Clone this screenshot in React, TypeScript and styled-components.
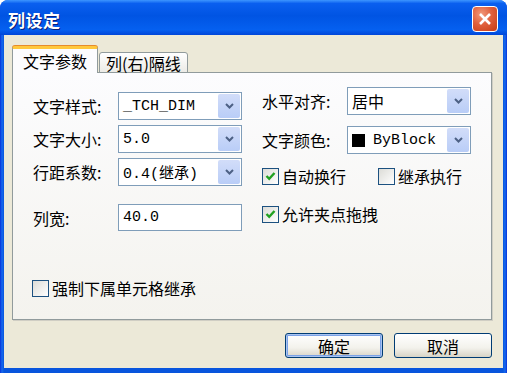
import React from "react";
import styled, { createGlobalStyle } from "styled-components";

const GlobalStyle = createGlobalStyle`
  html, body {
    margin: 0;
    padding: 0;
    background: #ffffff;
  }
  body {
    font-family: "Noto Sans CJK SC", "Noto Sans", sans-serif;
    color: #000000;
  }
`;

const Window = styled.div`
  width: 507px;
  height: 373px;
  display: flex;
  flex-direction: column;
  background: linear-gradient(to right, #0831d9 0px, #166aee 2px, #0855dd 4px, #0855dd 503px, #166aee 505px, #0831d9 507px);
  border-radius: 8px 8px 0 0;
  overflow: hidden;
`;

const TitleBar = styled.div`
  height: 35px;
  flex: none;
  display: flex;
  align-items: center;
  justify-content: space-between;
  padding: 3px 9px 0 8px;
  box-sizing: border-box;
  background: linear-gradient(
    to bottom,
    #3d95ff 0%,
    #0a5fef 10%,
    #0054e3 45%,
    #0560f0 85%,
    #0046d8 100%
  );
`;

const Title = styled.span`
  font-size: 17px;
  font-weight: 700;
  color: #ffffff;
  letter-spacing: 0.5px;
  text-shadow: 1px 1px 0 #0a1e7a;
`;

const CloseButton = styled.div`
  width: 26px;
  height: 26px;
  box-sizing: border-box;
  border: 1px solid #ffffff;
  border-radius: 4px;
  background: radial-gradient(circle at 35% 30%, #f19a7c 0%, #e0603d 45%, #c63a14 100%);
  display: flex;
  align-items: center;
  justify-content: center;
`;

const Body = styled.div`
  flex: 1;
  margin: 0 4px 5px 4px;
  background: #ece9d8;
  display: flex;
  flex-direction: column;
  padding: 12px 11px 9px 8px;
`;

const Tabs = styled.div`
  display: flex;
  align-items: flex-end;
  height: 26px;
  position: relative;
  z-index: 1;
  margin-bottom: -1px;
`;

const Tab = styled.div<{ $active?: boolean }>`
  box-sizing: border-box;
  height: ${(p) => (p.$active ? "27px" : "21px")};
  padding: 0 ${(p) => (p.$active ? "10px" : "6px")};
  margin-left: ${(p) => (p.$active ? "0" : "1px")};
  display: flex;
  align-items: center;
  justify-content: center;
  font-size: 16px;
  line-height: 1;
  border: 1px solid #919b9c;
  border-bottom: ${(p) => (p.$active ? "none" : "1px solid #919b9c")};
  border-top: ${(p) => (p.$active ? "3px solid #ffc83c" : "1px solid #919b9c")};
  border-radius: 3px 3px 0 0;
  background: ${(p) => (p.$active ? "#fcfcfe" : "linear-gradient(#ffffff, #ecebe6)")};
  box-shadow: ${(p) => (p.$active ? "0 -1px 0 #e68b2c" : "none")};
`;

const Panel = styled.div`
  height: 248px;
  box-sizing: border-box;
  border: 1px solid #919b9c;
  background: linear-gradient(#fcfcfe, #f4f3ee);
  display: flex;
  flex-direction: column;
  box-shadow: 1px 1px 0 #d0cec4;
`;

const Columns = styled.div`
  display: grid;
  grid-template-columns: 209px 210px;
  column-gap: 20px;
  padding-left: 20px;
`;

const Column = styled.div<{ $top: number }>`
  display: flex;
  flex-direction: column;
  padding-top: ${(p) => p.$top}px;
`;

const Row = styled.div<{ $gap?: number }>`
  display: flex;
  align-items: center;
  margin-top: ${(p) => p.$gap ?? 0}px;
`;

const Label = styled.span`
  width: 85px;
  flex: none;
  font-size: 16px;
  white-space: nowrap;
`;

const Combo = styled.div`
  width: 124px;
  height: 28px;
  box-sizing: border-box;
  border: 1px solid #7f9db9;
  background: #ffffff;
  display: flex;
  align-items: stretch;
`;

const Value = styled.span<{ $cjk?: boolean }>`
  flex: 1;
  display: flex;
  align-items: center;
  gap: 8px;
  padding-left: 4px;
  font-family: ${(p) =>
    p.$cjk ? '"Noto Sans CJK SC", sans-serif' : '"Liberation Mono", "Noto Sans CJK SC", monospace'};
  font-size: ${(p) => (p.$cjk ? "16px" : "15px")};
  white-space: nowrap;
  overflow: hidden;
`;

const Swatch = styled.span`
  width: 13px;
  height: 13px;
  background: #000000;
  flex: none;
`;

const DropButton = styled.span`
  width: 22px;
  margin: 1px;
  border-radius: 2px;
  background: linear-gradient(#d2ddf9, #b9cdf7);
  display: flex;
  align-items: center;
  justify-content: center;
`;

const TextField = styled.div`
  width: 124px;
  height: 27px;
  box-sizing: border-box;
  border: 1px solid #7f9db9;
  background: #ffffff;
  padding-left: 4px;
  display: flex;
  align-items: center;
  font-family: "Liberation Mono", monospace;
  font-size: 15px;
`;

const CheckRow = styled.label<{ $width?: number }>`
  display: flex;
  align-items: center;
  gap: 3px;
  font-size: 16px;
  width: ${(p) => (p.$width ? `${p.$width}px` : "auto")};
  white-space: nowrap;
`;

const Box = styled.span`
  width: 17px;
  height: 17px;
  box-sizing: border-box;
  border: 1px solid #1c5180;
  background: linear-gradient(135deg, #dcdcd7, #ffffff);
  display: flex;
  align-items: center;
  justify-content: center;
  flex: none;
`;

const BottomRow = styled.div`
  margin-top: auto;
  padding: 0 0 19px 19px;
`;

const Buttons = styled.div`
  display: flex;
  justify-content: flex-end;
  gap: 11px;
  margin-top: 13px;
`;

const Button = styled.button<{ $default?: boolean }>`
  width: 98px;
  height: 25px;
  border: 1px solid #003c74;
  border-radius: 3px;
  background: linear-gradient(#ffffff, #f3f2ec 60%, #d8d4c6);
  font-family: "Noto Sans CJK SC", sans-serif;
  font-size: 16px;
  line-height: 1;
  padding: 0;
  color: #000000;
  box-shadow: ${(p) =>
    p.$default ? "inset 0 0 0 1px #a9c4f0, inset 0 0 0 2px #7ba2e7" : "none"};
`;

const Chevron = () => (
  <svg width="9" height="6" viewBox="0 0 9 6">
    <path d="M1 1 L4.5 4.5 L8 1" fill="none" stroke="#4d6185" strokeWidth="2" />
  </svg>
);

const Check = ({ checked }: { checked?: boolean }) => (
  <Box>
    {checked && (
      <svg width="11" height="10" viewBox="0 0 11 10">
        <path d="M1.5 5 L4.2 7.8 L9.5 2" fill="none" stroke="#21a121" strokeWidth="2.4" />
      </svg>
    )}
  </Box>
);

const Select = ({ children, cjk }: { children: React.ReactNode; cjk?: boolean }) => (
  <Combo>
    <Value $cjk={cjk}>{children}</Value>
    <DropButton>
      <Chevron />
    </DropButton>
  </Combo>
);

export default function App() {
  return (
    <>
      <GlobalStyle />
      <Window>
        <TitleBar>
          <Title>列设定</Title>
          <CloseButton>
            <svg width="14" height="14" viewBox="0 0 14 14">
              <path d="M2 2 L12 12 M12 2 L2 12" stroke="#ffffff" strokeWidth="2.6" />
            </svg>
          </CloseButton>
        </TitleBar>
        <Body>
          <Tabs>
            <Tab $active>文字参数</Tab>
            <Tab>列(右)隔线</Tab>
          </Tabs>
          <Panel>
            <Columns>
              <Column $top={19}>
                <Row>
                  <Label>文字样式:</Label>
                  <Select>_TCH_DIM</Select>
                </Row>
                <Row $gap={5}>
                  <Label>文字大小:</Label>
                  <Select>5.0</Select>
                </Row>
                <Row $gap={5}>
                  <Label>行距系数:</Label>
                  <Select>0.4(继承)</Select>
                </Row>
                <Row $gap={18}>
                  <Label>列宽:</Label>
                  <TextField>40.0</TextField>
                </Row>
              </Column>
              <Column $top={14}>
                <Row>
                  <Label>水平对齐:</Label>
                  <Select cjk>居中</Select>
                </Row>
                <Row $gap={11}>
                  <Label>文字颜色:</Label>
                  <Select>
                    <Swatch />
                    ByBlock
                  </Select>
                </Row>
                <Row $gap={10}>
                  <CheckRow $width={116}>
                    <Check checked />
                    自动换行
                  </CheckRow>
                  <CheckRow>
                    <Check />
                    继承执行
                  </CheckRow>
                </Row>
                <Row $gap={14}>
                  <CheckRow>
                    <Check checked />
                    允许夹点拖拽
                  </CheckRow>
                </Row>
              </Column>
            </Columns>
            <BottomRow>
              <CheckRow>
                <Check />
                强制下属单元格继承
              </CheckRow>
            </BottomRow>
          </Panel>
          <Buttons>
            <Button $default>确定</Button>
            <Button>取消</Button>
          </Buttons>
        </Body>
      </Window>
    </>
  );
}
